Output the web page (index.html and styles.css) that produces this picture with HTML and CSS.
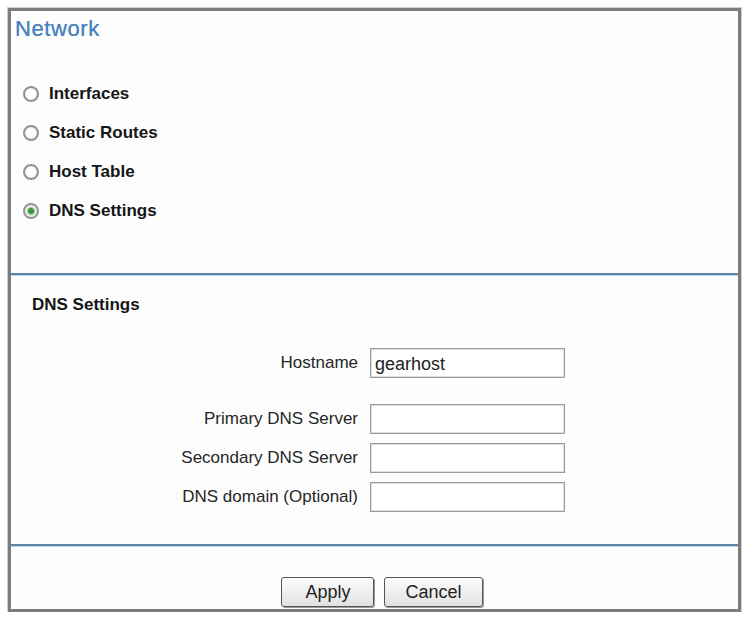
FILE: index.html
```html
<!DOCTYPE html>
<html lang="en">
<head>
    <meta charset="UTF-8">
    <title>Network</title>
    <link rel="stylesheet" href="styles.css">
</head>
<body>

<div class="panel">
    <h1 class="panel-title">Network</h1>

    <!-- section picker -->
    <div class="menu">
        <label class="menu-item"><input type="radio" name="section" value="interfaces"> Interfaces</label>
        <label class="menu-item"><input type="radio" name="section" value="routes"> Static Routes</label>
        <label class="menu-item"><input type="radio" name="section" value="hosts"> Host Table</label>
        <label class="menu-item"><input type="radio" name="section" value="dns" checked> DNS Settings</label>
    </div>

    <div class="divider"></div>

    <form id="dnsForm" class="dns">
        <h2 class="dns-title">DNS Settings</h2>

        <div class="field-row host-row">
            <label for="hostname" class="field-label">Hostname</label>
            <input type="text" id="hostname" name="hostname" value="gearhost">
        </div>
        <div class="field-row">
            <label for="dns1" class="field-label">Primary DNS Server</label>
            <input type="text" id="dns1" name="dns1">
        </div>
        <div class="field-row">
            <label for="dns2" class="field-label">Secondary DNS Server</label>
            <input type="text" id="dns2" name="dns2">
        </div>
        <div class="field-row">
            <label for="domain" class="field-label">DNS domain (Optional)</label>
            <input type="text" id="domain" name="domain">
        </div>
    </form>

    <div class="divider bottom"></div>

    <div class="actions">
        <button type="submit" form="dnsForm" class="apply">Apply</button>
        <button type="button" onclick="document.getElementById('dnsForm').reset()">Cancel</button>
    </div>
</div>

</body>
</html>
```

FILE: styles.css
```css
body {
    margin: 0;
    background-color: #ffffff;
    font-family: "Liberation Sans", Arial, sans-serif;
}
.panel {
    margin: 8px 2px 0 8px;
    border: 3px solid #7c7c7c;
    box-shadow: 0 0 0 1px #cfcfcf;
    background-color: #fdfdfd;
    padding-bottom: 2px;
}
.panel-title {
    margin: 6px 0 0 4px;
    font-size: 22px;
    line-height: 24px;
    letter-spacing: 0.6px;
    font-weight: normal;
    color: #4b84c0;
    text-shadow: 0 0 0.4px #4b84c0;
}
.menu {
    margin-top: 33px;
    padding-left: 12px;
}
.menu-item {
    display: flex;
    align-items: center;
    height: 39px;
    font-size: 17px;
    font-weight: bold;
    color: #161616;
}
.menu-item input {
    appearance: none;
    width: 16px;
    height: 16px;
    margin: 0 10px 0 0;
    border: 2px solid #939393;
    border-radius: 50%;
    background: radial-gradient(circle, #ffffff 40%, #e2e2e2 100%);
}
.menu-item input:checked {
    background: radial-gradient(circle, #3f9140 0, #3f9140 2.5px, #a9d6a6 3.5px, #e9f5e8 5px, #ffffff 6px);
}
.divider {
    margin-top: 43px;
    border-top: 2px solid #5a86ab;
    border-bottom: 1px solid #bdd3e6;
}
.divider.bottom {
    margin-top: 32px;
}
.dns {
    margin: 0;
}
.dns-title {
    margin: 19px 0 33px 21px;
    font-size: 17px;
    line-height: 20px;
    color: #161616;
}
.field-row {
    display: flex;
    align-items: center;
    gap: 12px;
    height: 30px;
    margin-top: 9px;
}
.host-row {
    margin: 0 0 26px;
}
.field-label {
    width: 347px;
    text-align: right;
    font-size: 17px;
    color: #262626;
}
.field-row input {
    box-sizing: border-box;
    width: 195px;
    height: 30px;
    margin: 0;
    padding: 2px 4px 0;
    border: 1px solid #9a9a9a;
    box-shadow: inset 0 0 0 1px #dedede;
    background-color: #ffffff;
    font-family: "Liberation Sans", Arial, sans-serif;
    font-size: 18px;
    color: #222;
}
.actions {
    display: flex;
    justify-content: center;
    gap: 10px;
    padding: 30px 0 0 15px;
}
.actions button {
    height: 30px;
    padding: 0 20px;
    border: 1px solid #555;
    border-radius: 3px;
    background: linear-gradient(#fcfcfc, #e2e2e2);
    box-shadow: 1px 1px 0 #9a9a9a;
    font-family: "Liberation Sans", Arial, sans-serif;
    font-size: 18px;
    color: #222;
    cursor: pointer;
}
.actions .apply {
    min-width: 93px;
}
```
